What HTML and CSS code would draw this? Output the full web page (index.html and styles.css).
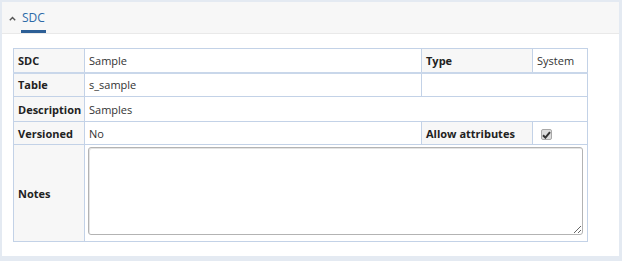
FILE: index.html
```html
<!DOCTYPE html>
<html lang="en">
<head>
    <meta charset="UTF-8">
    <title>SDC</title>
    <link rel="stylesheet" href="styles.css">
</head>
<body>
    <div class="panel">
        <div class="panel-header">
            <span class="chevron">
                <svg width="7" height="5" viewBox="0 0 7 5"><path d="M0.8 4.2 L3.5 1.5 L6.2 4.2" fill="none" stroke="#555" stroke-width="1.4"/></svg>
            </span>
            <span class="tab">SDC</span>
        </div>
        <div class="panel-body">
            <table class="details">
                <colgroup>
                    <col class="c1"><col class="c2"><col class="c3"><col class="c4">
                </colgroup>
                <tr class="first">
                    <th>SDC</th>
                    <td>Sample</td>
                    <th>Type</th>
                    <td>System</td>
                </tr>
                <tr class="r2">
                    <th>Table</th>
                    <td>s_sample</td>
                    <td colspan="2"></td>
                </tr>
                <tr class="r3">
                    <th>Description</th>
                    <td colspan="3">Samples</td>
                </tr>
                <tr class="r4">
                    <th>Versioned</th>
                    <td>No</td>
                    <th>Allow attributes</th>
                    <td><span class="check"><svg width="9" height="8" viewBox="0 0 9 8"><path d="M1 4.2 L3.4 6.6 L8 1.2" fill="none" stroke="#333" stroke-width="2"/></svg></span></td>
                </tr>
                <tr class="r5">
                    <th>Notes</th>
                    <td colspan="3" class="notes-cell"><textarea class="notes"></textarea></td>
                </tr>
            </table>
        </div>
    </div>
</body>
</html>
```

FILE: styles.css
```css
* {
    margin: 0;
    padding: 0;
    box-sizing: border-box;
}

body {
    background: #e4eaf2;
    padding: 2px 3px 5px 2px;
    font-family: 'Open Sans', sans-serif;
    font-size: 11px;
    color: #333;
}

.panel {
    background: #fff;
    height: 254px;
}

.panel-header {
    height: 32px;
    background: #f7f7f7;
    border-bottom: 1px solid #e9e9e9;
    display: flex;
    align-items: flex-start;
    padding-left: 7px;
}

.chevron {
    margin-top: 14px;
    width: 7px;
    height: 5px;
    display: flex;
}

.tab {
    margin-left: 5px;
    margin-top: 6px;
    color: #2d6aa8;
    font-size: 12px;
    height: 25px;
    line-height: 20px;
    border-bottom: 3px solid #2d5f96;
    padding: 0 1px;
}

.panel-body {
    padding: 14px 0 0 11px;
}

.details {
    border-collapse: collapse;
    table-layout: fixed;
    width: 574px;
}

.c1 { width: 71px; }
.c2 { width: 337px; }
.c3 { width: 111px; }
.c4 { width: 55px; }

.details th,
.details td {
    border: 1px solid #c3d2e7;
    padding: 0 4px;
    text-align: left;
    vertical-align: middle;
    white-space: nowrap;
}

.details th {
    background: #f7f7f7;
    font-weight: bold;
    color: #222;
}

.details tr.first th,
.details tr.first td {
    border-bottom: 2px solid #c9d7ea;
}

.first { height: 24px; }
.r2 { height: 24px; }
.r3 { height: 25px; }
.r4 { height: 23px; }
.r5 { height: 97px; }

.check {
    display: inline-flex;
    align-items: center;
    justify-content: center;
    width: 11px;
    height: 11px;
    margin-left: 4px;
    border: 1px solid #a8a8a8;
    border-radius: 2px;
    background: #dcdcdc;
    vertical-align: middle;
}

.details td.notes-cell {
    vertical-align: top;
    padding: 2px 3px 0;
}

.notes {
    display: block;
    width: 495px;
    height: 88px;
    border: 1px solid #b3b3b3;
    border-radius: 3px;
    box-shadow: inset 1px 1px 0 #e4e4e4;
    font-family: 'Open Sans', sans-serif;
    resize: both;
}
```
